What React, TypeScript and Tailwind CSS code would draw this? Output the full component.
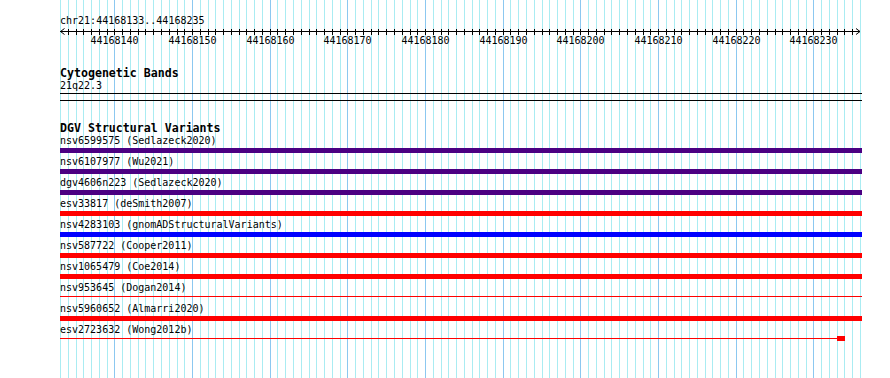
import React from 'react';

const START = 44168133;
const END = 44168235;
const BASES = END - START + 1;
const STEP = 800 / BASES;

const gridX = (i: number) => Math.round(i * STEP);

const TICKS = [44168140, 44168150, 44168160, 44168170, 44168180, 44168190, 44168200, 44168210, 44168220, 44168230];

const VARIANTS = [
  { name: 'nsv6599575 (Sedlazeck2020)', color: 'bg-[#4b0082]', kind: 'bar' },
  { name: 'nsv6107977 (Wu2021)', color: 'bg-[#4b0082]', kind: 'bar' },
  { name: 'dgv4606n223 (Sedlazeck2020)', color: 'bg-[#4b0082]', kind: 'bar' },
  { name: 'esv33817 (deSmith2007)', color: 'bg-[#ff0000]', kind: 'bar' },
  { name: 'nsv4283103 (gnomADStructuralVariants)', color: 'bg-[#0000ff]', kind: 'bar' },
  { name: 'nsv587722 (Cooper2011)', color: 'bg-[#ff0000]', kind: 'bar' },
  { name: 'nsv1065479 (Coe2014)', color: 'bg-[#ff0000]', kind: 'bar' },
  { name: 'nsv953645 (Dogan2014)', color: 'bg-[#ff0000]', kind: 'line' },
  { name: 'nsv5960652 (Almarri2020)', color: 'bg-[#ff0000]', kind: 'bar' },
  { name: 'esv2723632 (Wong2012b)', color: 'bg-[#ff0000]', kind: 'end' },
];

function Grid() {
  return (
    <svg className="absolute left-0 top-0 pointer-events-none" width={802} height={378} shapeRendering="crispEdges">
      {Array.from({ length: BASES + 1 }).map((_, i) => {
        const major = (START + i) % 10 === 0;
        return (
          <line
            key={i}
            x1={gridX(i) + 0.5}
            x2={gridX(i) + 0.5}
            y1={0}
            y2={378}
            stroke={major ? '#8cc8f0' : '#aaecf2'}
            strokeWidth={1}
          />
        );
      })}
    </svg>
  );
}

function Ruler() {
  return (
    <div>
      <div className="leading-[11px] pt-[15px]">chr21:{START}..{END}</div>
      <svg width={802} height={9} className="block">
        <line x1={0} x2={800} y1={5.5} y2={5.5} stroke="#000" shapeRendering="crispEdges" />
        {Array.from({ length: BASES - 1 }).map((_, i) => (
          <line
            key={i}
            x1={gridX(i + 1) + 0.5}
            x2={gridX(i + 1) + 0.5}
            y1={3}
            y2={9}
            stroke="#000"
            shapeRendering="crispEdges"
          />
        ))}
        <path d="M4.5 2.5 L0.5 5.5 L4.5 8.5" fill="none" stroke="#000" />
        <path d="M796 2.5 L800 5.5 L796 8.5" fill="none" stroke="#000" />
      </svg>
      <div className="relative h-[11px] leading-[11px]">
        {TICKS.map(t => (
          <span
            key={t}
            className="absolute top-0 -translate-x-1/2"
            style={{ left: gridX(t - START) + 0.5 }}
          >
            {t}
          </span>
        ))}
      </div>
    </div>
  );
}

function VariantRow({ v }: { v: (typeof VARIANTS)[number] }) {
  return (
    <div className="pb-[3px]">
      <div className="leading-[11px] whitespace-pre">{v.name}</div>
      {v.kind === 'bar' && <div className={`mt-[2px] h-[5px] ${v.color}`} />}
      {v.kind === 'line' && (
        <div className="mt-[2px] h-[5px] pt-[1px]">
          <div className={`h-px ${v.color}`} />
        </div>
      )}
      {v.kind === 'end' && (
        <div className="mt-[2px] h-[5px] flex items-start">
          <div className={`mt-[1px] h-px flex-1 ${v.color}`} />
          <div className={`-mt-[1px] h-[5px] w-[8px] ${v.color}`} />
          <div className="w-[17px]" />
        </div>
      )}
    </div>
  );
}

export default function App() {
  return (
    <div className="h-[378px] w-[890px] bg-white overflow-hidden text-black text-[10px] font-['DejaVu_Sans_Mono',monospace]">
      <div className="relative ml-[60px] w-[802px] h-[378px]">
        <Grid />
        <div className="relative">
          <Ruler />

          {/* Cytogenetic Bands */}
          <div className="mt-[21px] font-bold text-[11.6px] leading-[12px]">Cytogenetic Bands</div>
          <div className="mt-[1px] leading-[11px]">21q22.3</div>
          <div className="mt-[2px] h-px bg-black" />
          <div className="mt-[6px] h-px bg-black" />

          {/* DGV Structural Variants */}
          <div className="mt-[21px] font-bold text-[11.6px] leading-[12px]">DGV Structural Variants</div>
          <div className="mt-[1px]">
            {VARIANTS.map(v => (
              <VariantRow key={v.name} v={v} />
            ))}
          </div>
        </div>
      </div>
    </div>
  );
}
